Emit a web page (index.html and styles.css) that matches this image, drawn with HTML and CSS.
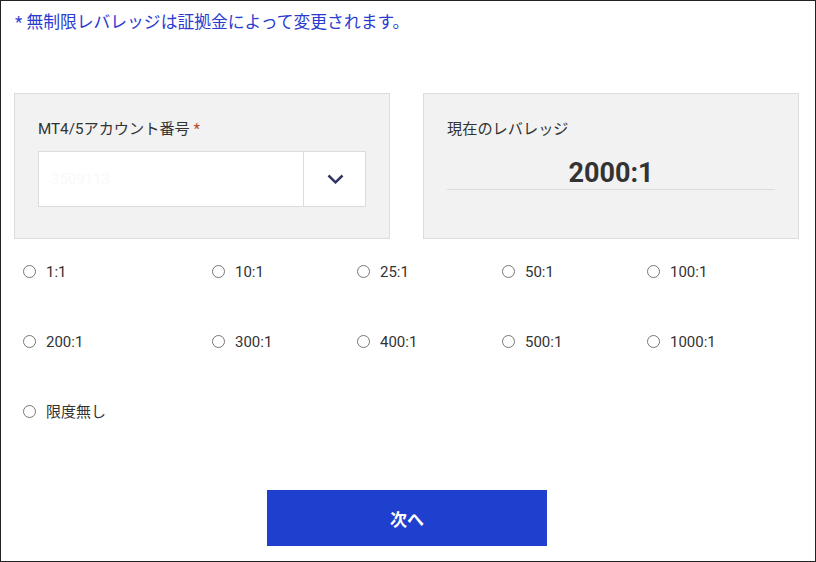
FILE: index.html
```html
<!DOCTYPE html>
<html lang="ja">
<head>
<meta charset="utf-8">
<link rel="stylesheet" href="styles.css">
</head>
<body>
<div class="frame">
  <p class="note">* 無制限レバレッジは証拠金によって変更されます。</p>
  <div class="cards">
    <div class="card">
      <div class="label">MT4/5アカウント番号 <span class="req">*</span></div>
      <div class="select">
        <div class="select-value">3509113</div>
        <div class="select-btn">
          <svg width="17" height="10" viewBox="0 0 17 10"><path d="M1.5 1.5 L8.5 8.3 L15.5 1.5" fill="none" stroke="#2d3561" stroke-width="2.5"/></svg>
        </div>
      </div>
    </div>
    <div class="card">
      <div class="label">現在のレバレッジ</div>
      <div class="current">2000:1</div>
    </div>
  </div>
  <div class="radios">
    <label class="radio"><span class="dot"></span><span>1:1</span></label>
    <label class="radio"><span class="dot"></span><span>10:1</span></label>
    <label class="radio"><span class="dot"></span><span>25:1</span></label>
    <label class="radio"><span class="dot"></span><span>50:1</span></label>
    <label class="radio"><span class="dot"></span><span>100:1</span></label>
    <label class="radio"><span class="dot"></span><span>200:1</span></label>
    <label class="radio"><span class="dot"></span><span>300:1</span></label>
    <label class="radio"><span class="dot"></span><span>400:1</span></label>
    <label class="radio"><span class="dot"></span><span>500:1</span></label>
    <label class="radio"><span class="dot"></span><span>1000:1</span></label>
    <label class="radio"><span class="dot"></span><span>限度無し</span></label>
  </div>
  <div class="actions">
    <button class="next">次へ</button>
  </div>
</div>
</body>
</html>
```
FILE: styles.css
```css
* { box-sizing: border-box; }
html, body { margin: 0; padding: 0; background: #fff; }
body {
  font-family: Roboto, "Noto Sans CJK JP", sans-serif;
  color: #333;
}
.frame {
  width: 816px;
  height: 562px;
  border: 1px solid #222;
  padding: 0 15px 0 13px;
  overflow: hidden;
}
.note {
  margin: 0;
  padding: 9px 0 0 1px;
  font-size: 16.8px;
  line-height: 24px;
  color: #2b3bd0;
}
.cards {
  display: grid;
  grid-template-columns: 376px 376px;
  column-gap: 33px;
  margin-top: 59px;
}
.card {
  height: 146px;
  background: #f2f2f2;
  border: 1px solid #dcdcdc;
  padding: 25px 23px 0 23px;
}
.label {
  font-size: 15.2px;
  line-height: 20px;
  color: #333;
}
.req { color: #b5452a; }
.select {
  display: flex;
  margin-top: 12px;
  width: 328px;
  height: 56px;
  background: #fff;
  border: 1px solid #dcdcdc;
}
.select-value {
  flex: 1;
  padding-left: 12px;
  display: flex;
  align-items: center;
  font-size: 15px;
  color: #f9f9f9;
}
.select-btn {
  width: 62px;
  border-left: 1px solid #dcdcdc;
  display: flex;
  align-items: center;
  justify-content: center;
}
.select-btn svg { display: block; margin-left: 2px; }
.current {
  margin-top: 18px;
  font-size: 27px;
  line-height: 32px;
  font-weight: 700;
  text-align: center;
  color: #333;
  border-bottom: 1px solid #dcdcdc;
  padding-bottom: 0;
}
.radios {
  display: grid;
  grid-template-columns: 189px 145px 145px 145px 1fr;
  grid-auto-rows: 70px;
  padding: 23px 0 0 9px;
}
.radio {
  display: flex;
  align-items: flex-start;
  font-size: 15px;
  line-height: 20px;
  color: #333;
}
.dot {
  width: 13px;
  height: 13px;
  border: 1px solid #777;
  border-radius: 50%;
  background: #fff;
  margin-top: 3px;
  margin-right: 10px;
  flex: none;
}
.actions {
  display: flex;
  justify-content: center;
  margin-top: 18px;
}
.next {
  width: 280px;
  height: 56px;
  border: 0;
  background: #1f3fcf;
  color: #fff;
  font-family: Roboto, "Noto Sans CJK JP", sans-serif;
  font-size: 17px;
  font-weight: 700;
}
```
